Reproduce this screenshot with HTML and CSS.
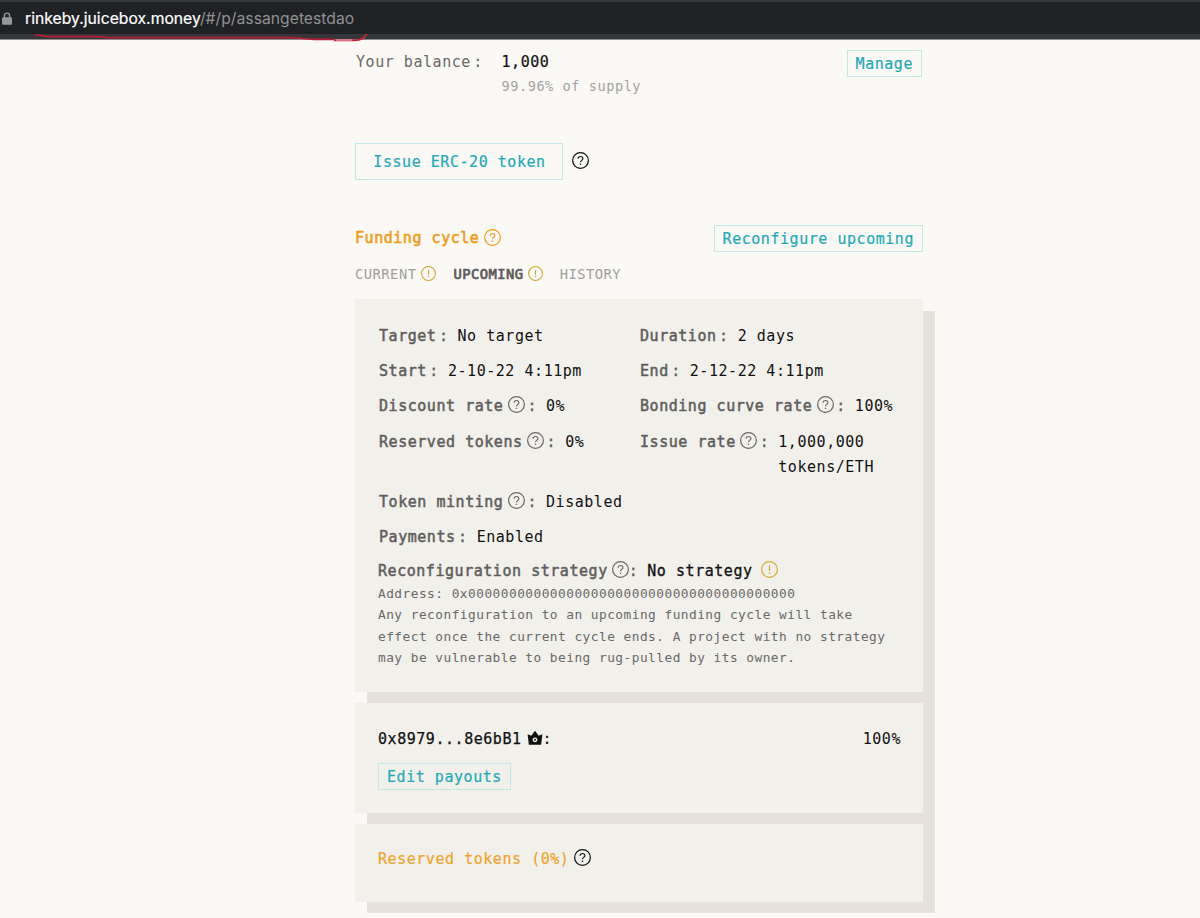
FILE: index.html
```html
<!DOCTYPE html>
<html lang="en">
<head>
    <meta charset="UTF-8">
    <meta name="viewport" content="width=device-width, initial-scale=1.0">
    <title>assangetestdao | Juicebox</title>
    <link rel="stylesheet" href="styles.css">
</head>
<body>
    <!-- shared icon shapes -->
    <svg class="sprite" width="0" height="0">
        <symbol id="question" viewBox="0 0 16 16">
            <circle cx="8" cy="8" r="7.4" fill="none" stroke="currentColor" stroke-width="1.15"/>
            <path d="M5.7 6.4C5.7 3.5 10.3 3.5 10.3 6.2C10.3 7.9 8 7.8 8 9.6" fill="none" stroke="currentColor" stroke-width="1.05"/>
            <circle cx="8" cy="11.5" r=".75" fill="currentColor"/>
        </symbol>
        <symbol id="warning" viewBox="0 0 16 16">
            <circle cx="8" cy="8" r="7.4" fill="none" stroke="currentColor" stroke-width="1.15"/>
            <path d="M8 4.2V9.3" fill="none" stroke="currentColor" stroke-width="1.2"/>
            <circle cx="8" cy="11.3" r=".8" fill="currentColor"/>
        </symbol>
        <symbol id="crown" viewBox="0 0 16 14">
            <path fill-rule="evenodd" fill="currentColor" d="M.6 3.2L4.3 4.8L7.6 .3Q8 -.1 8.4 .3L11.7 4.8L15.4 3.2L14.2 13.2Q14.1 13.7 13.6 13.7H2.4Q1.9 13.7 1.8 13.2ZM8 6.4A2.4 2.4 0 1 0 8 11.2A2.4 2.4 0 1 0 8 6.4ZM8 7.8A1 1 0 1 1 8 9.8A1 1 0 1 1 8 7.8Z"/>
        </symbol>
    </svg>

    <header class="address-bar">
        <svg class="lock" viewBox="0 0 10 13">
            <path d="M2.4 6V3.7C2.4 .3 7.6 .3 7.6 3.7V6" fill="none" stroke="#96989c" stroke-width="1.4"/>
            <rect x="0" y="5.2" width="10" height="7.6" rx="1.2" fill="#96989c"/>
        </svg>
        <span class="url"><span class="host">rinkeby.juicebox.money</span><span class="path">/#/p/assangetestdao</span></span>
        <svg class="underline" viewBox="0 0 340 12">
            <path d="M1 3C8 3 10 4.7 18 4.7H60C68 4.7 70 5.7 80 5.7H258C268 5.7 270 7.3 280 7.3H300" fill="none" stroke="#b41f35" stroke-width="1.7"/>
            <path d="M300 8.3H320C328 8.3 330 6 333 2" fill="none" stroke="#c5243c" stroke-width="1.8"/>
            <path d="M302 8H318" fill="none" stroke="#e0899a" stroke-width="1.6"/>
        </svg>
    </header>

    <main class="content">
        <section class="balance">
            <span class="balance__label">Your balance<span class="colon">:</span></span>
            <div class="balance__value">
                <div class="amount">1,000</div>
                <div class="share">99.96% of supply</div>
            </div>
            <button class="btn">Manage</button>
        </section>

        <section class="issue">
            <button class="btn btn--large">Issue ERC-20 token</button>
            <svg class="icon"><use href="#question"/></svg>
        </section>

        <section class="funding">
            <h2 class="funding__title">Funding cycle<svg class="icon"><use href="#question"/></svg></h2>
            <button class="btn">Reconfigure upcoming</button>
        </section>

        <nav class="tabs">
            <a class="tab">CURRENT<svg class="icon"><use href="#warning"/></svg></a>
            <a class="tab tab--active">UPCOMING<svg class="icon"><use href="#warning"/></svg></a>
            <a class="tab">HISTORY</a>
        </nav>

        <div class="stack">
            <div class="card card--details">
                <div class="details">
                    <div class="item"><span class="label">Target</span><span class="colon">:</span><span>No target</span></div>
                    <div class="item"><span class="label">Duration</span><span class="colon">:</span><span>2 days</span></div>
                    <div class="item"><span class="label">Start</span><span class="colon">:</span><span>2-10-22 4:11pm</span></div>
                    <div class="item"><span class="label">End</span><span class="colon">:</span><span>2-12-22 4:11pm</span></div>
                    <div class="item"><span class="label">Discount rate</span><svg class="icon"><use href="#question"/></svg><span class="colon">:</span><span>0%</span></div>
                    <div class="item"><span class="label">Bonding curve rate</span><svg class="icon"><use href="#question"/></svg><span class="colon">:</span><span>100%</span></div>
                    <div class="item"><span class="label">Reserved tokens</span><svg class="icon"><use href="#question"/></svg><span class="colon">:</span><span>0%</span></div>
                    <div class="item"><span class="label">Issue rate</span><svg class="icon"><use href="#question"/></svg><span class="colon">:</span><span>1,000,000<br>tokens/ETH</span></div>
                    <div class="item item--wide"><span class="label">Token minting</span><svg class="icon"><use href="#question"/></svg><span class="colon">:</span><span>Disabled</span></div>
                    <div class="item item--wide"><span class="label">Payments</span><span class="colon">:</span><span>Enabled</span></div>
                </div>
                <div class="item strategy">
                    <span class="label">Reconfiguration strategy</span><svg class="icon"><use href="#question"/></svg><span class="colon">:</span><span class="strategy__name">No strategy</span><svg class="icon icon--warn"><use href="#warning"/></svg>
                </div>
                <p class="note">Address: 0x0000000000000000000000000000000000000000<br>Any reconfiguration to an upcoming funding cycle will take<br>effect once the current cycle ends. A project with no strategy<br>may be vulnerable to being rug-pulled by its owner.</p>
            </div>

            <div class="card card--payouts">
                <div class="payout">
                    <span class="payout__address">0x8979...8e6bB1</span>
                    <svg class="crown"><use href="#crown"/></svg>
                    <span>:</span>
                    <span class="payout__percent">100%</span>
                </div>
                <button class="btn">Edit payouts</button>
            </div>

            <div class="card card--reserved">
                <span class="reserved">Reserved tokens (0%)</span>
                <svg class="icon"><use href="#question"/></svg>
            </div>
        </div>
    </main>
</body>
</html>
```
FILE: styles.css
```css
* {
    box-sizing: border-box;
}

body {
    margin: 0;
    height: 918px;
    overflow: hidden;
    background-color: #faf9f6;
    color: #111111;
    font-family: "DejaVu Sans Mono", monospace;
    font-size: 15px;
    letter-spacing: 0.54px;
    line-height: 25px;
}

.sprite {
    position: absolute;
}

/* browser bar */
.address-bar {
    position: relative;
    display: flex;
    align-items: center;
    height: 40px;
    padding: 0 0 5px 2px;
    background-color: #202124;
    border-top: 2px solid #35363a;
    border-bottom: 1px solid #8b8b8c;
    box-shadow: inset 0 -5px 0 #35363a;
}

.lock {
    width: 10px;
    height: 13px;
    margin-right: 13px;
}

.url {
    font-family: Inter, sans-serif;
    font-size: 15.7px;
    letter-spacing: 0.02px;
    color: #909195;
}

.host {
    color: #ffffff;
    -webkit-text-stroke: 0.2px;
}

.underline {
    position: absolute;
    left: 34px;
    top: 30px;
    width: 340px;
    height: 12px;
}

.content {
    width: 568px;
    margin-left: 355px;
}

.icon {
    flex: none;
    width: 17px;
    height: 17px;
}

.btn {
    height: 27px;
    padding: 1px 8px 0;
    border: 1px solid #bfe8e7;
    background: transparent;
    color: #21a9b8;
    font: inherit;
    letter-spacing: inherit;
    line-height: 24px;
    -webkit-text-stroke: 0.2px;
}

.btn--large {
    height: 37px;
    width: 208px;
    padding: 1px 0 0 1px;
}

/* balance */
.balance {
    display: flex;
    align-items: flex-start;
    height: 103px;
    padding: 10px 1px 0 1px;
}

.balance__label {
    width: 145.5px;
    color: #6a6967;
}

.balance__value {
    flex: 1;
}

.amount {
    height: 24px;
    -webkit-text-stroke: 0.2px;
}

.share {
    font-size: 13.6px;
    letter-spacing: 0.54px;
    color: #a3a29f;
}

.issue {
    display: flex;
    align-items: center;
    height: 37px;
    gap: 9px;
}

.issue .icon {
    margin-top: -3px;
}

/* funding cycle heading */
.funding {
    display: flex;
    justify-content: space-between;
    align-items: center;
    height: 27px;
    margin-top: 45px;
}

.funding__title {
    display: flex;
    align-items: center;
    margin: 0;
    font-size: 15px;
    font-weight: normal;
    color: #f09d18;
    -webkit-text-stroke: 0.6px;
}

.funding__title .icon {
    margin: -3px 0 0 5px;
}

.tabs {
    display: flex;
    height: 25px;
    margin: 10px 0 12px;
    font-size: 13.8px;
    letter-spacing: 0.47px;
    color: #a09f9c;
}

.tab {
    display: flex;
    align-items: center;
    margin-right: 17px;
}

.tab .icon {
    width: 15px;
    height: 15px;
    margin: -2px 0 0 5px;
    color: #cfa92a;
}

.tab--active {
    color: #5c5b59;
    -webkit-text-stroke: 0.7px;
}

.tab--active .icon {
    margin-left: 4px;
}

/* cards over one offset block */
.stack {
    display: flex;
    flex-direction: column;
    gap: 11px;
    width: 580px;
    padding: 0 12px 11px 0;
    background: linear-gradient(#e6e1db, #e6e1db) no-repeat 12px 12px;
}

.card {
    background-color: #f1f0eb;
}

.card--details {
    height: 393px;
    padding: 25px 23px 0;
}

.details {
    display: grid;
    grid-template-columns: 261px 1fr;
    row-gap: 10.2px;
    padding-left: 1px;
}

.item {
    display: flex;
    align-items: flex-start;
}

.item--wide {
    grid-column: 1 / 3;
}

.item .icon {
    margin: 2px 0 0 4.5px;
    color: #6a6967;
}

.label {
    color: #5f5e5c;
    -webkit-text-stroke: 0.5px;
}

.colon {
    margin: 0 9px 0 2.5px;
    color: #5f5e5c;
    -webkit-text-stroke: 0.3px;
}

.balance .colon {
    -webkit-text-stroke: 0;
}

.strategy {
    margin-top: 9px;
}

.strategy .icon {
    margin-left: 4px;
}

.strategy .colon {
    margin: 0 9px 0 0;
}

.strategy__name {
    -webkit-text-stroke: 0.3px;
}

.strategy .icon--warn {
    margin-left: 8px;
    color: #d5ac2a;
}

.note {
    margin: -1px 0 0;
    font-size: 12.8px;
    letter-spacing: 0.48px;
    line-height: 21.5px;
    color: #6a6967;
    white-space: nowrap;
}

.card--payouts {
    height: 110px;
    padding: 24px 22px 0 23px;
}

.payout {
    display: flex;
    align-items: center;
    margin-bottom: 11px;
}

.payout__address {
    -webkit-text-stroke: 0.25px;
}

.crown {
    width: 16px;
    height: 14px;
    margin: -3px 0 0 5px;
}

.payout__percent {
    margin-left: auto;
}

.card--reserved {
    display: flex;
    align-items: flex-start;
    height: 78px;
    padding: 23px;
}

.reserved {
    color: #f0a32a;
    -webkit-text-stroke: 0.2px;
}

.card--reserved .icon {
    margin: 2px 0 0 5px;
}
```
